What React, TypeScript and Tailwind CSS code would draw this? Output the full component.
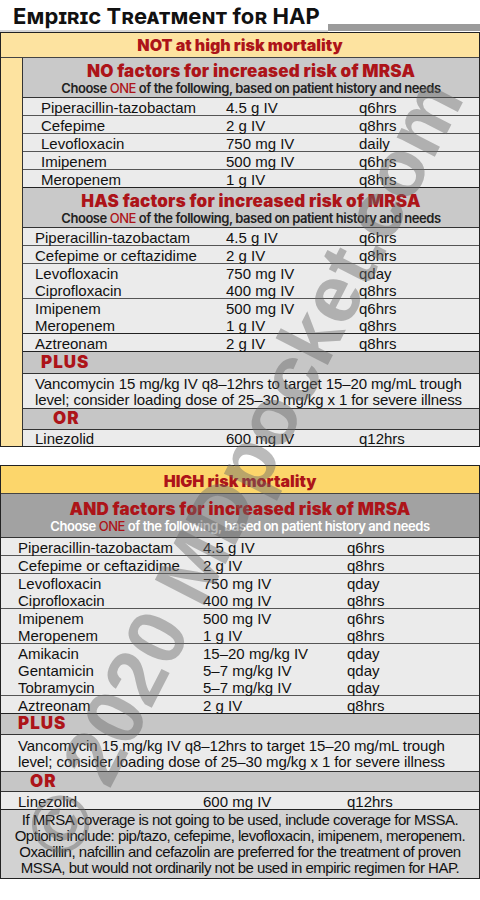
import React from "react";

const body = { fontFamily: '"Liberation Sans", Arial, sans-serif' };
const heavy = { fontFamily: 'Inter, "DejaVu Sans", sans-serif' };

type R = [string, string, string];

function Group({ rows, pl, nameW, doseW, last }: { rows: R[]; pl: string; nameW: string; doseW: string; last?: boolean }) {
  return (
    <div className={`bg-[#ebebeb] ${last ? "border-b border-[#222]" : "border-b border-[#555]"} ${pl}`}>
      {rows.map((r, i) => (
        <div key={i} className="flex h-[17px] items-center pt-[2px] text-[15px] leading-[17px] text-[#111]">
          <span className={`${nameW} shrink-0`}>{r[0]}</span>
          <span className={`${doseW} shrink-0`}>{r[1]}</span>
          <span>{r[2]}</span>
        </div>
      ))}
    </div>
  );
}

function Header({ title, dark }: { title: string; dark?: boolean }) {
  return (
    <div
      className={`${dark ? "bg-[#a2a2a2] h-[44px] pt-[6px]" : "bg-[#c9c9c9] h-[40px] pt-[4px]"} border-b border-[#333] flex flex-col items-center`}
    >
      <div className="text-[17px] leading-[19px] font-black text-[#ad1419] tracking-[0.2px]" style={heavy}>
        {title}
      </div>
      <div className={`text-[13px] leading-[15px] font-semibold tracking-[-0.45px] ${dark ? "text-white" : "text-[#222]"}`} style={heavy}>
        Choose <span className="text-[#ad1419] font-medium">ONE</span> of the following, based on patient history and needs
      </div>
    </div>
  );
}

function Label({ text, pl, h }: { text: string; pl: string; h: string }) {
  return (
    <div className={`bg-[#c6c6c6] border-b border-[#333] ${pl} ${h} flex items-center`}>
      <span className="text-[17px] font-black text-[#ad1419] tracking-[1px]" style={heavy}>
        {text}
      </span>
    </div>
  );
}

function Vanco({ pl, h }: { pl: string; h: string }) {
  return (
    <div className={`bg-[#ebebeb] border-b border-[#333] ${pl} ${h} flex flex-col justify-center pt-[1px] text-[15px] leading-[16px] text-[#111] tracking-[-0.1px]`}>
      <div>Vancomycin 15 mg/kg IV q8–12hrs to target 15–20 mg/mL trough</div>
      <div>level; consider loading dose of 25–30 mg/kg x 1 for severe illness</div>
    </div>
  );
}

export default function App() {
  return (
    <div className="relative w-[480px] min-h-[900px] bg-white overflow-hidden" style={body}>
      {/* Title */}
      <div className="flex items-end h-[32px]">
        <div className="pl-[13px] pr-[8px] h-[32px] flex items-end border-b-2 border-[#d4d4d4]">
          <span
            className="text-[22px] leading-[27px] font-bold text-[#111] tracking-[0.1px]"
            style={{ ...heavy, fontVariant: "small-caps" }}
          >
            Empiric Treatment for HAP
          </span>
        </div>
        <div className="flex-1 h-[7px] bg-[#9b9b9b] mb-[1px]" />
      </div>

      {/* Box 1 */}
      <div className="border border-[#222]">
        <div className="bg-[#fde3a0] h-[25px] flex items-center justify-center border-b border-[#444]">
          <span className="text-[16px] font-black text-[#ad1419]" style={heavy}>
            NOT at high risk mortality
          </span>
        </div>
        <div className="flex">
          <div className="w-[21px] shrink-0 bg-[#fde3a0]" />
          <div className="flex-1 border-l border-[#333]">
            <Header title="NO factors for increased risk of MRSA" />
            {([
              ["Piperacillin-tazobactam", "4.5 g IV", "q6hrs"],
              ["Cefepime", "2 g IV", "q8hrs"],
              ["Levofloxacin", "750 mg IV", "daily"],
              ["Imipenem", "500 mg IV", "q6hrs"],
              ["Meropenem", "1 g IV", "q8hrs"],
            ] as R[]).map((r, i) => (
              <Group key={i} rows={[r]} pl="pl-[18px]" nameW="w-[185px]" doseW="w-[133px]" last={i === 4} />
            ))}
            <Header title="HAS factors for increased risk of MRSA" />
            <Group rows={[["Piperacillin-tazobactam", "4.5 g IV", "q6hrs"]]} pl="pl-[12px]" nameW="w-[191px]" doseW="w-[133px]" />
            <Group rows={[["Cefepime or ceftazidime", "2 g IV", "q8hrs"]]} pl="pl-[12px]" nameW="w-[191px]" doseW="w-[133px]" />
            <Group
              rows={[
                ["Levofloxacin", "750 mg IV", "qday"],
                ["Ciprofloxacin", "400 mg IV", "q8hrs"],
              ]}
              pl="pl-[12px]"
              nameW="w-[191px]"
              doseW="w-[133px]"
            />
            <Group
              rows={[
                ["Imipenem", "500 mg IV", "q6hrs"],
                ["Meropenem", "1 g IV", "q8hrs"],
              ]}
              pl="pl-[12px]"
              nameW="w-[191px]"
              doseW="w-[133px]"
              last
            />
            <Group rows={[["Aztreonam", "2 g IV", "q8hrs"]]} pl="pl-[12px]" nameW="w-[191px]" doseW="w-[133px]" last />
            <Label text="PLUS" pl="pl-[18px]" h="h-[22px]" />
            <Vanco pl="pl-[12px]" h="h-[35px]" />
            <Label text="OR" pl="pl-[30px]" h="h-[21px]" />
            <div className="bg-[#ebebeb] pl-[12px] h-[16px] flex items-center pt-[1px] text-[15px] leading-[16px] text-[#111]">
              <span className="w-[191px] shrink-0">Linezolid</span>
              <span className="w-[133px] shrink-0">600 mg IV</span>
              <span>q12hrs</span>
            </div>
          </div>
        </div>
      </div>

      <div className="h-[18px]" />

      {/* Box 2 */}
      <div className="border border-[#222]">
        <div className="bg-[#fcd66b] h-[28px] flex items-center justify-center pt-[2px] border-b border-[#444]">
          <span className="text-[16px] font-black text-[#ad1419]" style={heavy}>
            HIGH risk mortality
          </span>
        </div>
        <Header title="AND factors for increased risk of MRSA" dark />
        <Group rows={[["Piperacillin-tazobactam", "4.5 g IV", "q6hrs"]]} pl="pl-[17px]" nameW="w-[185px]" doseW="w-[144px]" />
        <Group rows={[["Cefepime or ceftazidime", "2 g IV", "q8hrs"]]} pl="pl-[17px]" nameW="w-[185px]" doseW="w-[144px]" />
        <Group
          rows={[
            ["Levofloxacin", "750 mg IV", "qday"],
            ["Ciprofloxacin", "400 mg IV", "q8hrs"],
          ]}
          pl="pl-[17px]"
          nameW="w-[185px]"
          doseW="w-[144px]"
        />
        <Group
          rows={[
            ["Imipenem", "500 mg IV", "q6hrs"],
            ["Meropenem", "1 g IV", "q8hrs"],
          ]}
          pl="pl-[17px]"
          nameW="w-[185px]"
          doseW="w-[144px]"
        />
        <Group
          rows={[
            ["Amikacin", "15–20 mg/kg IV", "qday"],
            ["Gentamicin", "5–7 mg/kg IV", "qday"],
            ["Tobramycin", "5–7 mg/kg IV", "qday"],
          ]}
          pl="pl-[17px]"
          nameW="w-[185px]"
          doseW="w-[144px]"
        />
        <Group rows={[["Aztreonam", "2 g IV", "q8hrs"]]} pl="pl-[17px]" nameW="w-[185px]" doseW="w-[144px]" last />
        <Label text="PLUS" pl="pl-[17px]" h="h-[21px]" />
        <Vanco pl="pl-[17px]" h="h-[37px]" />
        <Label text="OR" pl="pl-[29px]" h="h-[20px]" />
        <Group rows={[["Linezolid", "600 mg IV", "q12hrs"]]} pl="pl-[17px]" nameW="w-[185px]" doseW="w-[144px]" last />
        <div className="bg-[#d2d2d2] h-[68px] flex flex-col justify-center items-center text-[15px] leading-[16px] text-[#111] tracking-[-0.5px] text-center">
          <div>If MRSA coverage is not going to be used, include coverage for MSSA.</div>
          <div>Options include: pip/tazo, cefepime, levofloxacin, imipenem, meropenem.</div>
          <div>Oxacillin, nafcillin and cefazolin are preferred for the treatment of proven</div>
          <div>MSSA, but would not ordinarily not be used in empiric regimen for HAP.</div>
        </div>
      </div>

      {/* Watermark */}
      <div
        className="pointer-events-none absolute left-[244px] top-[468px] -translate-x-1/2 -translate-y-1/2 -rotate-[62.8deg] whitespace-nowrap text-[81px] font-bold leading-none text-[#6a6a6a] opacity-45"
        style={body}
      >
        © 2020 MDpocket.com
      </div>
    </div>
  );
}
